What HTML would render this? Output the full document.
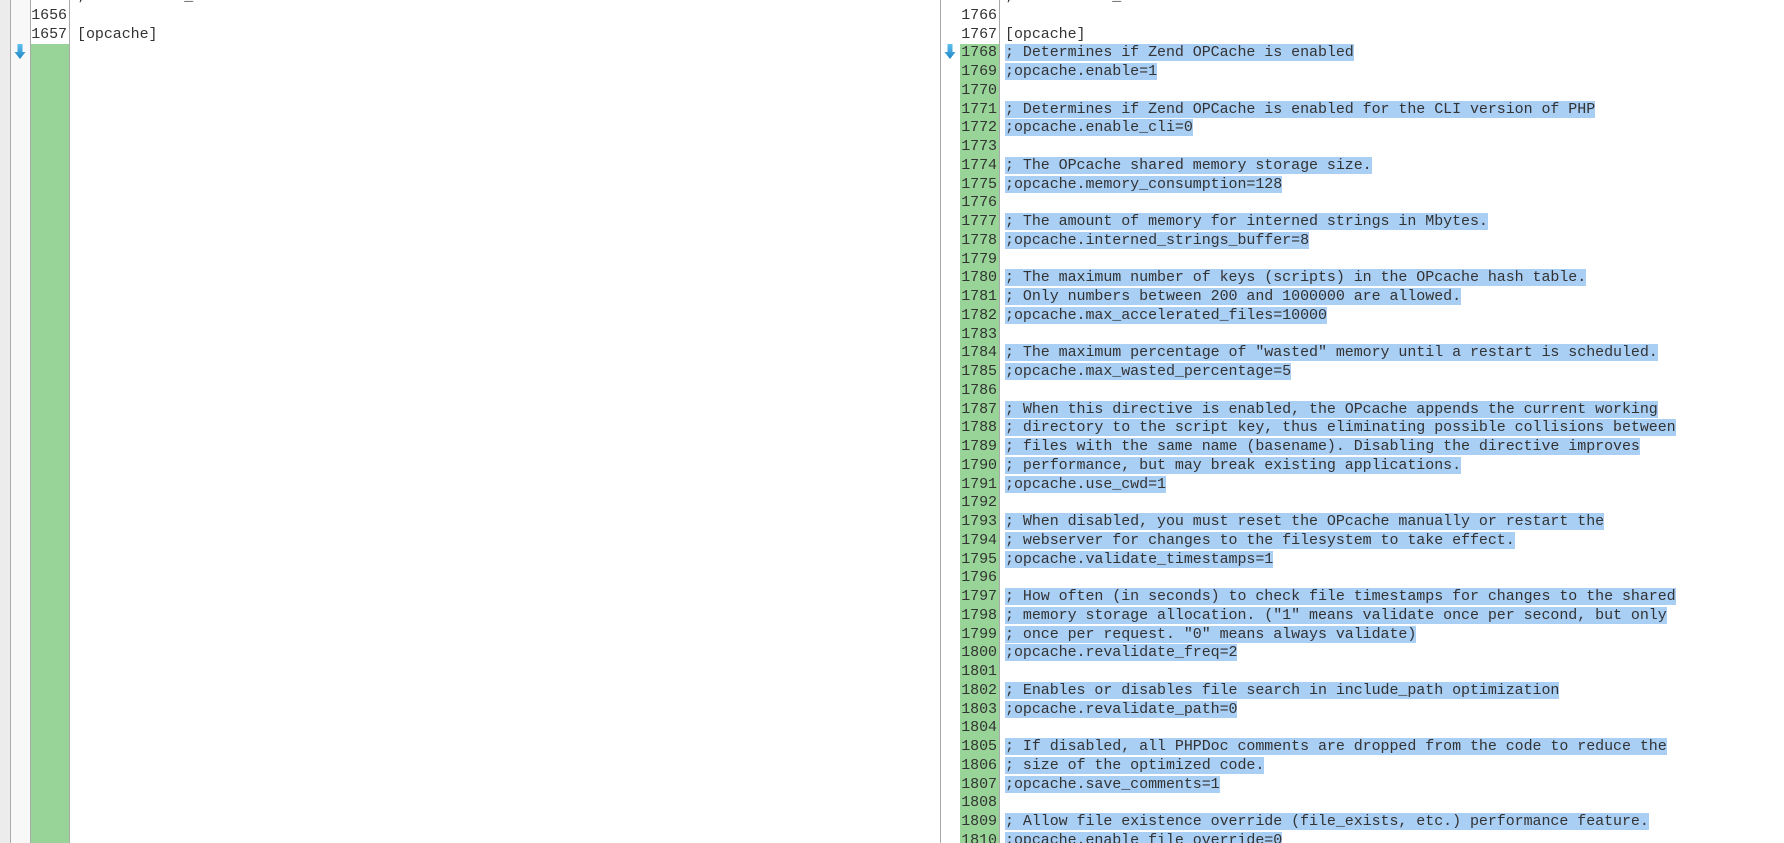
<!DOCTYPE html>
<html><head><meta charset="utf-8"><style>
html,body{margin:0;padding:0;width:1784px;height:843px;overflow:hidden;background:#fff;position:relative}
.abs{position:absolute}
.code{font-family:"Liberation Mono",monospace;font-size:15px;line-height:18.75px;color:#333;white-space:pre;letter-spacing:-0.06px}
.num{text-align:right;color:#333}
.hl{background:#aacff5}
.arrow{position:absolute;width:12px;height:16px}
</style></head><body>
<!-- left pane -->
<div class="abs" style="left:0;top:0;width:10px;height:843px;background:#ececec"></div>
<div class="abs" style="left:10px;top:0;width:1px;height:843px;background:#aaa"></div>
<div class="abs" style="left:11px;top:0;width:19px;height:843px;background:#f8f8f8"></div>
<div class="abs" style="left:30px;top:0;width:1px;height:843px;background:#aaa"></div>
<div class="abs" style="left:31px;top:44px;width:38px;height:799px;background:#98d498"></div>
<div class="abs" style="left:69px;top:0;width:1px;height:843px;background:#aaa"></div>
<div class="abs code num" style="left:31px;top:-12px;width:36px">1655
1656
1657</div>
<div class="abs code" style="left:77px;top:-12px">;abdvdefault_handler

[opcache]</div>
<svg class="arrow" style="left:14px;top:44px" viewBox="0 0 12 16"><defs><linearGradient id="g" x1="0" y1="0" x2="0" y2="1"><stop offset="0" stop-color="#5cc0ee"/><stop offset="1" stop-color="#1f86c6"/></linearGradient></defs><path d="M3.5 0H8.5V8H11.5L6 15L0.5 8H3.5Z" fill="url(#g)"/></svg>

<!-- right pane -->
<div class="abs" style="left:940px;top:0;width:1px;height:843px;background:#aaa"></div>
<div class="abs" style="left:960px;top:44px;width:39px;height:799px;background:#98d498"></div>
<div class="abs" style="left:999px;top:0;width:1px;height:843px;background:#aaa"></div>
<svg class="arrow" style="left:944px;top:44px" viewBox="0 0 12 16"><path d="M3.5 0H8.5V8H11.5L6 15L0.5 8H3.5Z" fill="url(#g)"/></svg>
<div class="abs code num" style="left:960px;top:-12px;width:37px">1765
1766
1767
1768
1769
1770
1771
1772
1773
1774
1775
1776
1777
1778
1779
1780
1781
1782
1783
1784
1785
1786
1787
1788
1789
1790
1791
1792
1793
1794
1795
1796
1797
1798
1799
1800
1801
1802
1803
1804
1805
1806
1807
1808
1809
1810</div>
<div class="abs code" style="left:1005px;top:-12px">;abdvdefault_handler

[opcache]
<span class="hl">; Determines if Zend OPCache is enabled</span>
<span class="hl">;opcache.enable=1</span>

<span class="hl">; Determines if Zend OPCache is enabled for the CLI version of PHP</span>
<span class="hl">;opcache.enable_cli=0</span>

<span class="hl">; The OPcache shared memory storage size.</span>
<span class="hl">;opcache.memory_consumption=128</span>

<span class="hl">; The amount of memory for interned strings in Mbytes.</span>
<span class="hl">;opcache.interned_strings_buffer=8</span>

<span class="hl">; The maximum number of keys (scripts) in the OPcache hash table.</span>
<span class="hl">; Only numbers between 200 and 1000000 are allowed.</span>
<span class="hl">;opcache.max_accelerated_files=10000</span>

<span class="hl">; The maximum percentage of "wasted" memory until a restart is scheduled.</span>
<span class="hl">;opcache.max_wasted_percentage=5</span>

<span class="hl">; When this directive is enabled, the OPcache appends the current working</span>
<span class="hl">; directory to the script key, thus eliminating possible collisions between</span>
<span class="hl">; files with the same name (basename). Disabling the directive improves</span>
<span class="hl">; performance, but may break existing applications.</span>
<span class="hl">;opcache.use_cwd=1</span>

<span class="hl">; When disabled, you must reset the OPcache manually or restart the</span>
<span class="hl">; webserver for changes to the filesystem to take effect.</span>
<span class="hl">;opcache.validate_timestamps=1</span>

<span class="hl">; How often (in seconds) to check file timestamps for changes to the shared</span>
<span class="hl">; memory storage allocation. ("1" means validate once per second, but only</span>
<span class="hl">; once per request. "0" means always validate)</span>
<span class="hl">;opcache.revalidate_freq=2</span>

<span class="hl">; Enables or disables file search in include_path optimization</span>
<span class="hl">;opcache.revalidate_path=0</span>

<span class="hl">; If disabled, all PHPDoc comments are dropped from the code to reduce the</span>
<span class="hl">; size of the optimized code.</span>
<span class="hl">;opcache.save_comments=1</span>

<span class="hl">; Allow file existence override (file_exists, etc.) performance feature.</span>
<span class="hl">;opcache.enable_file_override=0</span></div>
</body></html>
